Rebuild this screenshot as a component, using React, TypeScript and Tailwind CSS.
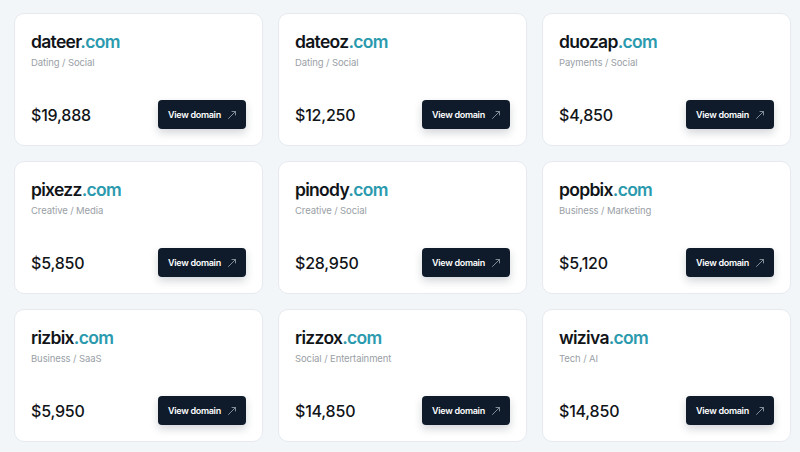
import React from "react";

const items = [
  { name: "dateer", cat: "Dating / Social", price: "$19,888" },
  { name: "dateoz", cat: "Dating / Social", price: "$12,250" },
  { name: "duozap", cat: "Payments / Social", price: "$4,850" },
  { name: "pixezz", cat: "Creative / Media", price: "$5,850" },
  { name: "pinody", cat: "Creative / Social", price: "$28,950" },
  { name: "popbix", cat: "Business / Marketing", price: "$5,120" },
  { name: "rizbix", cat: "Business / SaaS", price: "$5,950" },
  { name: "rizzox", cat: "Social / Entertainment", price: "$14,850" },
  { name: "wiziva", cat: "Tech / AI", price: "$14,850" },
];

function Arrow() {
  return (
    <svg width="10" height="10" viewBox="0 0 10 10" fill="none" stroke="#8f98a3" strokeWidth="0.9" strokeLinecap="round" strokeLinejoin="round">
      <path d="M1.5 8.5 L8.5 1.5" />
      <path d="M5 1.5 H8.5 V5" />
    </svg>
  );
}

export default function App() {
  return (
    <div className="min-h-[452px] w-[800px] bg-[#f3f6f9] pt-[13px] pl-[14px] overflow-hidden" style={{ fontFamily: "Inter, 'Noto Sans', sans-serif" }}>
      <div className="grid grid-cols-[249px_249px_249px] gap-[15px]">
        {items.map((it) => (
          <div key={it.name} className="h-[133px] bg-white border border-[#e6eaef] rounded-[10px] px-[16px] pt-[16px] pb-[16px] flex flex-col justify-between">
            <div>
              <div className="text-[17.5px] leading-[24px] font-semibold tracking-[-0.7px] text-[#111418]">
                {it.name}
                <span className="text-[#2b9aae]">.com</span>
              </div>
              <div className="text-[9.5px] leading-[14px] mt-[2px] tracking-[-0.1px] text-[#9aa0a6]">{it.cat}</div>
            </div>
            <div className="flex items-center justify-between">
              <div className="text-[16px] font-medium text-[#111418] tracking-[-0.2px]">{it.price}</div>
              <div className="w-[88px] h-[29px] rounded-[4px] bg-[#0f1b2b] shadow-[0_4px_8px_rgba(15,27,43,0.18)] flex items-center pl-[10px] pr-[9px] justify-between">
                <span className="text-[9px] font-semibold text-white tracking-[-0.3px]">View domain</span>
                <Arrow />
              </div>
            </div>
          </div>
        ))}
      </div>
    </div>
  );
}
